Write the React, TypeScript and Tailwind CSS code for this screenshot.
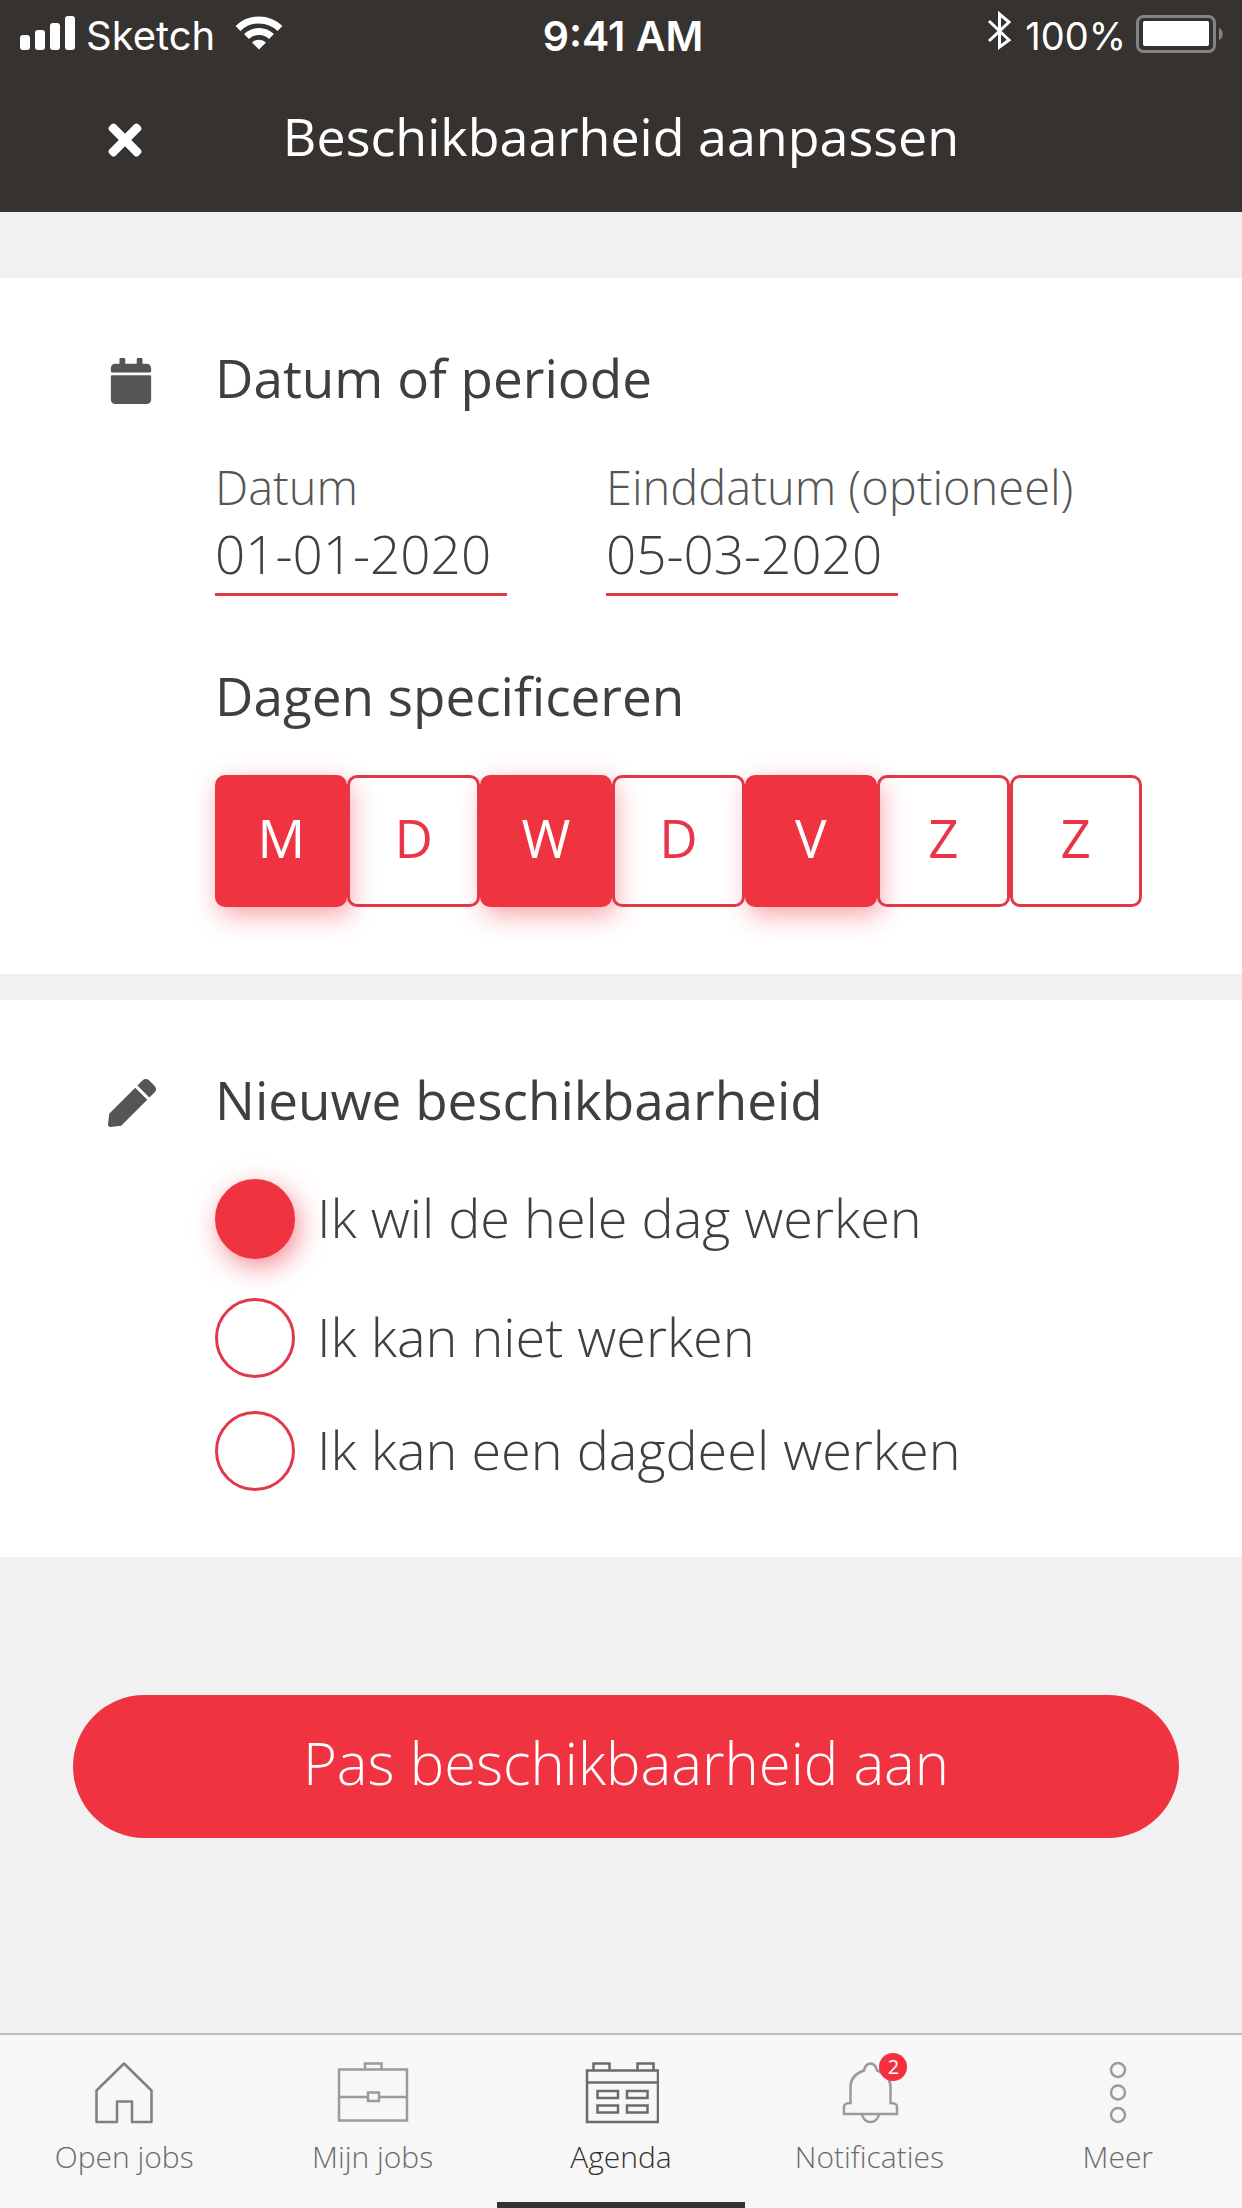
import React, { useState } from 'react';
import { FaCalendar, FaPen, FaTimes } from 'react-icons/fa';

const days = [
  { id: 'ma', label: 'M' },
  { id: 'di', label: 'D' },
  { id: 'wo', label: 'W' },
  { id: 'do', label: 'D' },
  { id: 'vr', label: 'V' },
  { id: 'za', label: 'Z' },
  { id: 'zo', label: 'Z' },
];

const options = [
  { id: 'hele-dag', label: 'Ik wil de hele dag werken' },
  { id: 'niet', label: 'Ik kan niet werken' },
  { id: 'dagdeel', label: 'Ik kan een dagdeel werken' },
];

const StatusBar: React.FC = () => (
  <div className="flex h-[72px] items-center justify-between font-['Inter',sans-serif] text-[40px] leading-[72px]">
    <div className="flex flex-1 items-center pl-5">
      <svg width="56" height="72" viewBox="0 0 56 72" fill="currentColor" aria-hidden="true">
        <rect x="0" y="35" width="10" height="15" rx="3" />
        <rect x="15" y="30" width="10" height="20" rx="3" />
        <rect x="30" y="23" width="10" height="27" rx="3" />
        <rect x="45" y="16" width="10" height="34" rx="3" />
      </svg>
      <span className="ml-2.5">Sketch</span>
      <svg className="ml-5" width="48" height="72" viewBox="0 0 48 72" aria-hidden="true">
        <g fill="none" stroke="currentColor" strokeWidth="7">
          <path d="M3 28.500a30 30 0 0 1 42 0" />
          <path d="M11.500 36.500a18 18 0 0 1 25 0" />
        </g>
        <path d="M17 42.500a10 10 0 0 1 14 0L24 49.500z" fill="currentColor" />
      </svg>
    </div>
    <span className="text-[41px] font-semibold">9:41 AM</span>
    <div className="flex flex-1 items-center justify-end pr-4">
      <svg width="26" height="72" viewBox="0 0 26 72" fill="none" stroke="currentColor" strokeWidth="3" aria-hidden="true">
        <path d="M2 21L22 40L12.500 47V14L22 22L2 41" />
      </svg>
      <span className="ml-3 text-[38px]">100%</span>
      <svg className="ml-2.5" width="90" height="72" viewBox="0 0 90 72" aria-hidden="true">
        <rect x="1.500" y="16.500" width="77" height="35" rx="6" fill="none" stroke="#86827f" strokeWidth="3" />
        <rect x="7" y="21" width="66" height="25" rx="2" fill="currentColor" />
        <path d="M83 28a6 6.500 0 0 1 0 12z" fill="#86827f" />
      </svg>
    </div>
  </div>
);

const HomeIcon: React.FC = () => (
  <svg width="76" height="64" viewBox="0 0 76 64" fill="none" stroke="#808080" strokeWidth="2.500" strokeLinejoin="round" aria-hidden="true">
    <path d="M38 2.500L65.500 29.500V61H46V40.500H31V61H10.500V29.500z" />
  </svg>
);

const BriefcaseIcon: React.FC = () => (
  <svg width="76" height="64" viewBox="0 0 76 64" fill="none" stroke="#9b9b9b" strokeWidth="2.500" aria-hidden="true">
    <path d="M4 8.500H72V59.500H4zM30 8.500V2.500H46.500V8.500" />
    <path d="M4 36H33M44 36H72M33 31.500H44V40H33z" />
  </svg>
);

const AgendaIcon: React.FC = () => (
  <svg width="76" height="64" viewBox="0 0 76 64" fill="none" stroke="#6b6b6b" strokeWidth="2.500" aria-hidden="true">
    <path d="M4 9.500H75V61H4zM4 21.500H75" />
    <path d="M10.500 9.500V2.500H26.500V9.500M54.500 9.500V2.500H70.500V9.500" />
    <path d="M14.500 30H35V37H14.500zM44 30H64.500V37H44zM14.500 44.500H35V51.500H14.500zM44 44.500H64.500V51.500H44z" />
  </svg>
);

const BellIcon: React.FC = () => (
  <svg width="76" height="64" viewBox="0 0 76 64" fill="none" stroke="#9b9b9b" strokeWidth="2.500" aria-hidden="true">
    <path d="M13 53V45.500Q13.500 42 19.500 42V25Q20 14 33 9.500Q34.500 2.500 39.500 2.500Q44.500 2.500 46 9.500Q59 14 59.500 25V42Q65.500 42 66 45.500V53z" />
    <path d="M31 53.500Q33 61 39.500 61Q46 61 48 53.500" />
  </svg>
);

const MoreIcon: React.FC = () => (
  <svg width="76" height="64" viewBox="0 0 76 64" fill="none" stroke="#9b9b9b" strokeWidth="2.500" aria-hidden="true">
    <circle cx="38" cy="9" r="7" />
    <circle cx="38" cy="31.500" r="7" />
    <circle cx="38" cy="54" r="7" />
  </svg>
);

const tabs = [
  { label: 'Open jobs', icon: HomeIcon },
  { label: 'Mijn jobs', icon: BriefcaseIcon },
  { label: 'Agenda', icon: AgendaIcon, active: true },
  { label: 'Notificaties', icon: BellIcon, badge: 2 },
  { label: 'Meer', icon: MoreIcon },
];

interface DateFieldProps {
  id: string;
  label: string;
  value: string;
  onChange: (value: string) => void;
}

const DateField: React.FC<DateFieldProps> = ({ id, label, value, onChange }) => (
  <div className="flex flex-col">
    <label htmlFor={id} className="text-[47px] leading-[58px] font-light whitespace-nowrap text-[#555555]">
      {label}
    </label>
    <input
      id={id}
      type="text"
      value={value}
      onChange={(e) => onChange(e.target.value)}
      className="mt-[5px] h-[75px] w-[292px] border-b-3 border-[#e2384a] bg-transparent pb-2 text-[53px] leading-[64px] font-light outline-none"
    />
  </div>
);

const App: React.FC = () => {
  const [startDate, setStartDate] = useState<string>('01-01-2020');
  const [endDate, setEndDate] = useState<string>('05-03-2020');
  const [selectedDays, setSelectedDays] = useState<string[]>(['ma', 'wo', 'vr']);
  const [availability, setAvailability] = useState<string>('hele-dag');

  const toggleDay = (id: string) => {
    setSelectedDays((prev) => (prev.includes(id) ? prev.filter((d) => d !== id) : [...prev, id]));
  };

  return (
    <div className="flex min-h-screen flex-col bg-[#f1f1f1] font-['Open_Sans',sans-serif] text-[#3f3f3f]">
      <header className="bg-[#363230] text-white">
        <StatusBar />
        <div className="grid grid-cols-[1fr_auto_1fr] items-start pt-8 pb-9">
          <button type="button" aria-label="Sluiten" className="ml-[101px] flex size-[72px] items-center">
            <FaTimes size={48} />
          </button>
          <h1 className="text-[52px] leading-[64px]">Beschikbaarheid aanpassen</h1>
        </div>
      </header>

      <main className="flex grow flex-col pt-[66px]">
        {/* Datum en dagen */}
        <section className="flex bg-white pt-[68px] pr-[100px] pb-[67px] pl-[108px]">
          <div className="flex h-[70px] w-[107px] shrink-0 items-center text-[#555555]">
            <FaCalendar size={46} />
          </div>
          <div className="min-w-0 grow">
            <h2 className="text-[53px] leading-[64px]">Datum of periode</h2>
            <div className="mt-12 flex gap-[99px]">
              <DateField id="start-date" label="Datum" value={startDate} onChange={setStartDate} />
              <DateField id="end-date" label="Einddatum (optioneel)" value={endDate} onChange={setEndDate} />
            </div>

            <h2 className="mt-[68px] text-[53px] leading-[64px]">Dagen specificeren</h2>
            <div className="mt-[47px] grid grid-cols-7">
              {days.map((day) => {
                const selected = selectedDays.includes(day.id);
                return (
                  <button
                    key={day.id}
                    type="button"
                    aria-pressed={selected}
                    onClick={() => toggleDay(day.id)}
                    className={`h-[132px] rounded-[10px] border-3 pb-1.5 text-[53px] leading-[64px] ${
                      selected
                        ? 'border-[#ef3340] bg-[#ef3340] text-white shadow-[4px_8px_26px_rgba(239,51,64,0.45)]'
                        : 'border-[#e2384a] text-[#e8354a]'
                    }`}
                  >
                    {day.label}
                  </button>
                );
              })}
            </div>
          </div>
        </section>

        {/* Beschikbaarheid */}
        <section className="mt-[26px] flex bg-white pt-[68px] pr-[100px] pb-[66px] pl-[108px]">
          <div className="flex h-[70px] w-[107px] shrink-0 items-center text-[#555555]">
            <FaPen size={48} />
          </div>
          <div className="min-w-0 grow">
            <h2 id="availability" className="text-[53px] leading-[64px]">
              Nieuwe beschikbaarheid
            </h2>
            <div role="radiogroup" aria-labelledby="availability" className="mt-[47px] flex flex-col gap-[33px]">
              {options.map((option) => (
                <div key={option.id} className="flex items-start gap-[22px] first:mb-1.5">
                  <input
                    id={option.id}
                    type="radio"
                    name="availability"
                    checked={availability === option.id}
                    onChange={() => setAvailability(option.id)}
                    className="size-20 shrink-0 appearance-none rounded-full border-3 border-[#e2384a] checked:border-[#ef3340] checked:bg-[#ef3340] checked:shadow-[4px_8px_26px_rgba(239,51,64,0.55)]"
                  />
                  <label htmlFor={option.id} className="text-[54px] leading-[76px] font-light">
                    {option.label}
                  </label>
                </div>
              ))}
            </div>
          </div>
        </section>

        <button
          type="button"
          className="mt-[138px] mr-[63px] mb-12 ml-[73px] h-[143px] rounded-full bg-[#ef3340] pb-2 text-[58px] font-light text-white"
        >
          Pas beschikbaarheid aan
        </button>
      </main>

      <nav className="grid grid-cols-5 border-t-2 border-[#bbbbbb] bg-[#f7f7f7]">
        {tabs.map(({ label, icon: Icon, active, badge }) => (
          <a
            key={label}
            href="#"
            aria-current={active ? 'page' : undefined}
            className={`flex flex-col items-center border-b-6 pt-[26px] pb-[25px] ${
              active ? 'border-[#363230] text-[#363230]' : 'border-transparent text-[#6b6b6b]'
            }`}
          >
            <span className="relative">
              <Icon />
              {badge && (
                <span className="absolute -top-2 right-0 flex size-7 items-center justify-center rounded-full bg-[#f5303e] text-[20px] leading-none text-white">
                  {badge}
                </span>
              )}
            </span>
            <span className="mt-3 text-[30px] leading-[40px] font-light">{label}</span>
          </a>
        ))}
      </nav>
    </div>
  );
};

export default App;
